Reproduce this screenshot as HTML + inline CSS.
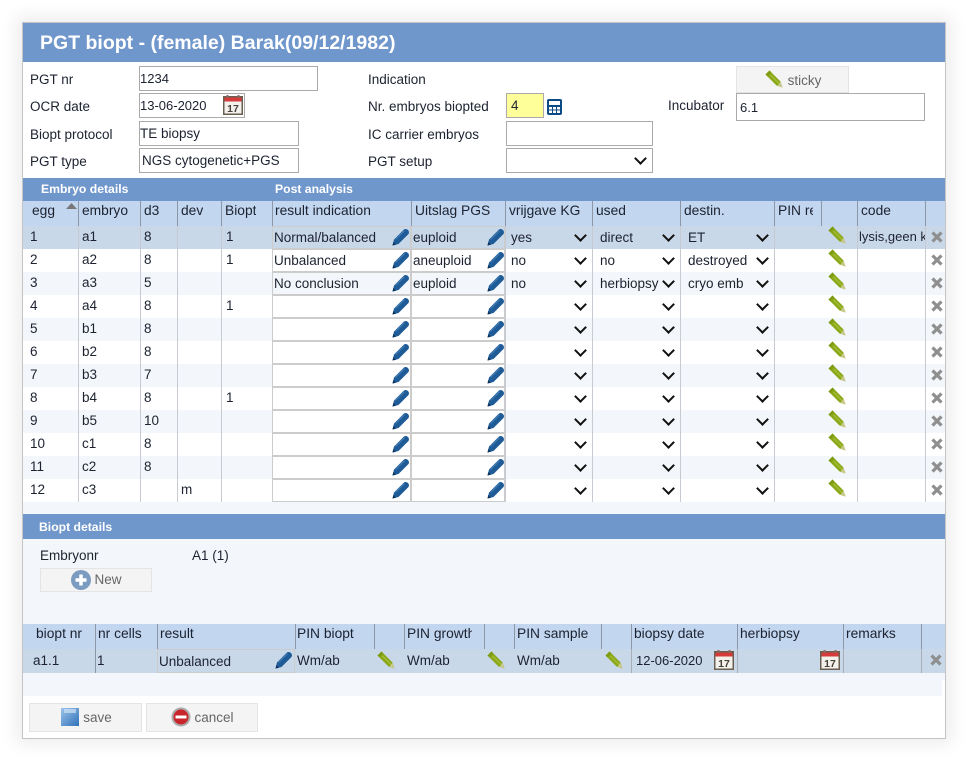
<!DOCTYPE html>
<html><head><meta charset="utf-8"><title>PGT biopt</title>
<style>
*{box-sizing:border-box}
html,body{margin:0;padding:0;background:#fff}
body{width:968px;height:761px;position:relative;overflow:hidden;font:13.5px "Liberation Sans",sans-serif;color:#1c2230}
#p,.s,.l,.in,.f,.h,.hs,.t,.v,.btn,svg,.sel,.bar{position:absolute}
#p{left:22px;top:22px;width:924px;height:717px;background:#fff;border:1px solid #c4c4c4;box-shadow:0 0 16px 6px rgba(0,0,0,.07)}
.bar{background:#7097cc;left:23px;width:922px}
.s{color:#fff;font-weight:bold;font-size:12.2px;white-space:nowrap}
.l{white-space:nowrap;line-height:16px}
.f{border:1px solid #aaa;height:25px;line-height:23px;padding-left:0;white-space:nowrap;background:#fff}
.h{background:#c2d6ef;left:23px;width:922px}
.hs{top:0;width:1px;background:#8b97a6}
.t{white-space:nowrap;line-height:16px;overflow:hidden}
.th{font-size:13.8px;margin-top:-1px}
.v{width:1px;background:#c6cbd1}
.in{border:1px solid #ccc;height:23px;line-height:22px;white-space:nowrap;padding-left:1px}
.sel{height:23px;display:block}
.sel select{display:block;width:100%;height:100%;border:0;background:transparent;font:13.5px "Liberation Sans",sans-serif;color:#1c2230;padding:0 0 0 4px;margin:0;outline:0;appearance:none;-webkit-appearance:none}
.sel::after{content:"";position:absolute;right:7.5px;top:5px;width:7px;height:7px;border-right:2px solid #111;border-bottom:2px solid #111;transform:rotate(45deg);pointer-events:none}
.s1{left:507px;width:85px}.s2{left:596px;width:84px}.s3{left:684px;width:90px}
.btn{background:#f4f4f4;border:1px solid #e4e4e4;color:#666;text-align:center;white-space:nowrap}
</style></head><body>
<svg width="0" height="0" style="left:0;top:0"><defs>
<symbol id="bp" viewBox="0 0 18 18"><path d="M.5 17.500 L2 11.500 L12 1.500 Q14 .3 16 2 Q17.700 4 16.500 6 L6.500 16 Z" fill="#1f5c97"/><path d="M3.500 11.500 L12.500 2.700" stroke="#3f7cb5" stroke-width="1.200" fill="none"/><path d="M.5 17.500 L1.300 14 L4 16.700 Z" fill="#0e3560"/></symbol>
<symbol id="gp" viewBox="0 0 18 18"><path d="M.5 4.500 L4.500 .5 L15.500 11.500 L17.500 17.500 L11.500 15.500 Z" fill="#8aa81a"/><path d="M5.500 5 L14 13.500" stroke="#a6c03a" stroke-width="1.200"/><path d="M15.500 11.500 L17.500 17.500 L12.500 15.800Z" fill="#c9c88a"/><path d="M.5 4.500 L4.500 .5 L6.300 2.300 L2.300 6.300Z" fill="#7d9a10"/></symbol>
<symbol id="x" viewBox="0 0 12 12"><path d="M1.500 1.500 L10.500 10.500 M10.500 1.500 L1.500 10.500" stroke="#8f8f8f" stroke-width="3.200"/></symbol>
<symbol id="cal" viewBox="0 0 20 20"><rect x=".75" y="1.750" width="18.500" height="17.500" fill="#f3f1ec" stroke="#6a5f50" stroke-width="1.500"/><rect x="1.500" y="2.500" width="17" height="4" fill="#d63a3a"/><rect x="3.500" y="0" width="2" height="3" fill="#8a6a60"/><rect x="14.500" y="0" width="2" height="3" fill="#8a6a60"/><text x="10" y="17" text-anchor="middle" font-family="Liberation Sans,sans-serif" font-weight="bold" font-size="10.500" fill="#4a4238">17</text></symbol>
<linearGradient id="fl" x1="0" y1="0" x2="1" y2="1"><stop offset="0" stop-color="#9cc4ea"/><stop offset="1" stop-color="#2f72b8"/></linearGradient>
</defs></svg>

<div id="p"></div>
<div class="bar" style="top:23px;height:39px"></div>
<div class="s" style="left:40px;top:32px;font-size:19.500px;line-height:22px">PGT biopt - (female) Barak(09/12/1982)</div>

<div class="l" style="left:30px;top:72px">PGT nr</div>
<div class="l" style="left:30px;top:99px">OCR date</div>
<div class="l" style="left:30px;top:127px">Biopt protocol</div>
<div class="l" style="left:30px;top:154px">PGT type</div>
<div class="l" style="left:368px;top:72px">Indication</div>
<div class="l" style="left:368px;top:99px">Nr. embryos biopted</div>
<div class="l" style="left:368px;top:127px">IC carrier embryos</div>
<div class="l" style="left:368px;top:154px">PGT setup</div>
<div class="l" style="left:668px;top:98px">Incubator</div>

<div class="f" style="left:139px;top:66px;width:179px;font-size:13px">1234</div>
<div class="f" style="left:139px;top:93px;width:106px;font-size:13px">13-06-2020</div>
<svg style="left:223px;top:95px" width="20" height="20"><use href="#cal"/></svg>
<div class="f" style="left:139px;top:121px;width:160px">TE biopsy</div>
<div class="f" style="left:139px;top:148px;width:160px;padding-left:2px">NGS cytogenetic+PGS</div>
<div class="f" style="left:506px;top:93px;width:38px;background:#ffff99;padding-left:4px">4</div>
<svg style="left:547px;top:99px" width="15" height="16" viewBox="0 0 15 16"><rect x="0" y="0" width="15" height="16" rx="2" fill="#0b4a84"/><rect x="2" y="2" width="11" height="4" fill="#fff"/><path d="M2 8h3v2.500H2zM6 8h3v2.500H6zM10 8h3v2.500h-3zM2 11.500h3V14H2zM6 11.500h3V14H6zM10 11.500h3V14h-3z" fill="#fff"/></svg>
<div class="f" style="left:506px;top:121px;width:147px"></div>
<div class="f" style="left:506px;top:148px;width:147px"></div>
<span class="sel" style="left:507px;top:149px;width:145px"><select><option></option></select></span>
<div class="f" style="left:736px;top:93px;width:189px;height:28px;line-height:28px;padding-left:3px;font-size:13px">6.1</div>
<div class="btn" style="left:736px;top:66px;width:113px;height:27px;line-height:28px;padding-left:24px">sticky</div>
<svg style="left:765px;top:70px" width="18" height="18"><use href="#gp"/></svg>

<div class="bar" style="top:178px;height:23px"></div>
<div class="s" style="left:41px;top:181px;line-height:16px">Embryo details</div>
<div class="s" style="left:275px;top:181px;line-height:16px">Post analysis</div>

<div class="h" style="top:201px;height:25px"></div>
<svg style="left:66px;top:203px" width="11" height="6"><path d="M0 6 L5.500 0 L11 6Z" fill="#777"/></svg>
<div class="hs" style="left:78px;top:201px;height:25px"></div><div class="hs" style="left:140px;top:201px;height:25px"></div><div class="hs" style="left:177px;top:201px;height:25px"></div><div class="hs" style="left:221px;top:201px;height:25px"></div><div class="hs" style="left:272px;top:201px;height:25px"></div><div class="hs" style="left:411px;top:201px;height:25px"></div><div class="hs" style="left:505px;top:201px;height:25px"></div><div class="hs" style="left:592px;top:201px;height:25px"></div><div class="hs" style="left:680px;top:201px;height:25px"></div><div class="hs" style="left:774px;top:201px;height:25px"></div><div class="hs" style="left:821px;top:201px;height:25px"></div><div class="hs" style="left:857px;top:201px;height:25px"></div><div class="hs" style="left:925px;top:201px;height:25px"></div>
<div class="t th" style="left:32px;top:204px">egg</div>
<div class="t th" style="left:82px;top:204px">embryo</div>
<div class="t th" style="left:144px;top:204px">d3</div>
<div class="t th" style="left:181px;top:204px">dev</div>
<div class="t th" style="left:225px;top:204px">Biopt</div>
<div class="t th" style="left:275px;top:204px">result indication</div>
<div class="t th" style="left:415px;top:204px">Uitslag PGS</div>
<div class="t th" style="left:509px;top:204px">vrijgave KG</div>
<div class="t th" style="left:596px;top:204px">used</div>
<div class="t th" style="left:684px;top:204px">destin.</div>
<div class="t th" style="left:778px;top:204px;width:35px">PIN re</div>
<div class="t th" style="left:861px;top:204px">code</div>

<!-- row backgrounds -->
<div class="bar" style="top:226px;height:23px;background:#c9d8e9"></div>
<div class="bar" style="top:272px;height:23px;background:#f3f6fa"></div>
<div class="bar" style="top:318px;height:23px;background:#f3f6fa"></div>
<div class="bar" style="top:364px;height:23px;background:#f3f6fa"></div>
<div class="bar" style="top:410px;height:23px;background:#f3f6fa"></div>
<div class="bar" style="top:456px;height:23px;background:#f3f6fa"></div>
<div class="bar" style="top:502px;height:194px;background:#f3f6fa"></div>
<div class="bar" style="top:680px;height:16px;left:942px;width:3px;background:#fff"></div>
<!-- row separators -->
<div class="v" style="left:78px;top:226px;height:276px"></div><div class="v" style="left:140px;top:226px;height:276px"></div><div class="v" style="left:177px;top:226px;height:276px"></div><div class="v" style="left:221px;top:226px;height:276px"></div><div class="v" style="left:505px;top:226px;height:276px"></div><div class="v" style="left:592px;top:226px;height:276px"></div><div class="v" style="left:680px;top:226px;height:276px"></div><div class="v" style="left:774px;top:226px;height:276px"></div><div class="v" style="left:857px;top:226px;height:276px"></div><div class="v" style="left:925px;top:226px;height:276px"></div>

<!-- row 1 -->
<div class="t" style="left:30px;top:229px">1</div><div class="t" style="left:82px;top:229px">a1</div><div class="t" style="left:144px;top:229px">8</div><div class="t" style="left:226px;top:229px">1</div>
<div class="in" style="left:272px;top:226px;width:139px">Normal/balanced</div><div class="in" style="left:411px;top:226px;width:94px">euploid</div>
<svg style="left:392px;top:228px" width="18" height="18"><use href="#bp"/></svg><svg style="left:487px;top:228px" width="18" height="18"><use href="#bp"/></svg>
<span class="sel s1" style="top:226px"><select><option>yes</option></select></span><span class="sel s2" style="top:226px"><select><option>direct</option></select></span><span class="sel s3" style="top:226px"><select><option>ET</option></select></span>
<svg style="left:828px;top:226px" width="18" height="18"><use href="#gp"/></svg>
<div class="t" style="left:859px;top:229px;width:66px;font-size:13px">lysis,geen k</div>
<svg style="left:931px;top:231px" width="12" height="12"><use href="#x"/></svg>
<!-- row 2 -->
<div class="t" style="left:30px;top:252px">2</div><div class="t" style="left:82px;top:252px">a2</div><div class="t" style="left:144px;top:252px">8</div><div class="t" style="left:226px;top:252px">1</div>
<div class="in" style="left:272px;top:249px;width:139px">Unbalanced</div><div class="in" style="left:411px;top:249px;width:94px">aneuploid</div>
<svg style="left:392px;top:251px" width="18" height="18"><use href="#bp"/></svg><svg style="left:487px;top:251px" width="18" height="18"><use href="#bp"/></svg>
<span class="sel s1" style="top:249px"><select><option>no</option></select></span><span class="sel s2" style="top:249px"><select><option>no</option></select></span><span class="sel s3" style="top:249px"><select><option>destroyed</option></select></span>
<svg style="left:828px;top:249px" width="18" height="18"><use href="#gp"/></svg>
<svg style="left:931px;top:254px" width="12" height="12"><use href="#x"/></svg>
<!-- row 3 -->
<div class="t" style="left:30px;top:275px">3</div><div class="t" style="left:82px;top:275px">a3</div><div class="t" style="left:144px;top:275px">5</div>
<div class="in" style="left:272px;top:272px;width:139px">No conclusion</div><div class="in" style="left:411px;top:272px;width:94px">euploid</div>
<svg style="left:392px;top:274px" width="18" height="18"><use href="#bp"/></svg><svg style="left:487px;top:274px" width="18" height="18"><use href="#bp"/></svg>
<span class="sel s1" style="top:272px"><select><option>no</option></select></span><span class="sel s2" style="top:272px"><select><option>herbiopsy</option></select></span><span class="sel s3" style="top:272px"><select><option>cryo emb</option></select></span>
<svg style="left:828px;top:272px" width="18" height="18"><use href="#gp"/></svg>
<svg style="left:931px;top:277px" width="12" height="12"><use href="#x"/></svg>
<!-- row 4 -->
<div class="t" style="left:30px;top:298px">4</div><div class="t" style="left:82px;top:298px">a4</div><div class="t" style="left:144px;top:298px">8</div><div class="t" style="left:226px;top:298px">1</div>
<div class="in" style="left:272px;top:295px;width:139px;background:#fff"></div><div class="in" style="left:411px;top:295px;width:94px;background:#fff"></div>
<svg style="left:392px;top:297px" width="18" height="18"><use href="#bp"/></svg><svg style="left:487px;top:297px" width="18" height="18"><use href="#bp"/></svg>
<span class="sel s1" style="top:295px"><select><option></option></select></span><span class="sel s2" style="top:295px"><select><option></option></select></span><span class="sel s3" style="top:295px"><select><option></option></select></span>
<svg style="left:828px;top:295px" width="18" height="18"><use href="#gp"/></svg>
<svg style="left:931px;top:300px" width="12" height="12"><use href="#x"/></svg>
<!-- row 5 -->
<div class="t" style="left:30px;top:321px">5</div><div class="t" style="left:82px;top:321px">b1</div><div class="t" style="left:144px;top:321px">8</div>
<div class="in" style="left:272px;top:318px;width:139px;background:#fff"></div><div class="in" style="left:411px;top:318px;width:94px;background:#fff"></div>
<svg style="left:392px;top:320px" width="18" height="18"><use href="#bp"/></svg><svg style="left:487px;top:320px" width="18" height="18"><use href="#bp"/></svg>
<span class="sel s1" style="top:318px"><select><option></option></select></span><span class="sel s2" style="top:318px"><select><option></option></select></span><span class="sel s3" style="top:318px"><select><option></option></select></span>
<svg style="left:828px;top:318px" width="18" height="18"><use href="#gp"/></svg>
<svg style="left:931px;top:323px" width="12" height="12"><use href="#x"/></svg>
<!-- row 6 -->
<div class="t" style="left:30px;top:344px">6</div><div class="t" style="left:82px;top:344px">b2</div><div class="t" style="left:144px;top:344px">8</div>
<div class="in" style="left:272px;top:341px;width:139px;background:#fff"></div><div class="in" style="left:411px;top:341px;width:94px;background:#fff"></div>
<svg style="left:392px;top:343px" width="18" height="18"><use href="#bp"/></svg><svg style="left:487px;top:343px" width="18" height="18"><use href="#bp"/></svg>
<span class="sel s1" style="top:341px"><select><option></option></select></span><span class="sel s2" style="top:341px"><select><option></option></select></span><span class="sel s3" style="top:341px"><select><option></option></select></span>
<svg style="left:828px;top:341px" width="18" height="18"><use href="#gp"/></svg>
<svg style="left:931px;top:346px" width="12" height="12"><use href="#x"/></svg>
<!-- row 7 -->
<div class="t" style="left:30px;top:367px">7</div><div class="t" style="left:82px;top:367px">b3</div><div class="t" style="left:144px;top:367px">7</div>
<div class="in" style="left:272px;top:364px;width:139px;background:#fff"></div><div class="in" style="left:411px;top:364px;width:94px;background:#fff"></div>
<svg style="left:392px;top:366px" width="18" height="18"><use href="#bp"/></svg><svg style="left:487px;top:366px" width="18" height="18"><use href="#bp"/></svg>
<span class="sel s1" style="top:364px"><select><option></option></select></span><span class="sel s2" style="top:364px"><select><option></option></select></span><span class="sel s3" style="top:364px"><select><option></option></select></span>
<svg style="left:828px;top:364px" width="18" height="18"><use href="#gp"/></svg>
<svg style="left:931px;top:369px" width="12" height="12"><use href="#x"/></svg>
<!-- row 8 -->
<div class="t" style="left:30px;top:390px">8</div><div class="t" style="left:82px;top:390px">b4</div><div class="t" style="left:144px;top:390px">8</div><div class="t" style="left:226px;top:390px">1</div>
<div class="in" style="left:272px;top:387px;width:139px;background:#fff"></div><div class="in" style="left:411px;top:387px;width:94px;background:#fff"></div>
<svg style="left:392px;top:389px" width="18" height="18"><use href="#bp"/></svg><svg style="left:487px;top:389px" width="18" height="18"><use href="#bp"/></svg>
<span class="sel s1" style="top:387px"><select><option></option></select></span><span class="sel s2" style="top:387px"><select><option></option></select></span><span class="sel s3" style="top:387px"><select><option></option></select></span>
<svg style="left:828px;top:387px" width="18" height="18"><use href="#gp"/></svg>
<svg style="left:931px;top:392px" width="12" height="12"><use href="#x"/></svg>
<!-- row 9 -->
<div class="t" style="left:30px;top:413px">9</div><div class="t" style="left:82px;top:413px">b5</div><div class="t" style="left:144px;top:413px">10</div>
<div class="in" style="left:272px;top:410px;width:139px;background:#fff"></div><div class="in" style="left:411px;top:410px;width:94px;background:#fff"></div>
<svg style="left:392px;top:412px" width="18" height="18"><use href="#bp"/></svg><svg style="left:487px;top:412px" width="18" height="18"><use href="#bp"/></svg>
<span class="sel s1" style="top:410px"><select><option></option></select></span><span class="sel s2" style="top:410px"><select><option></option></select></span><span class="sel s3" style="top:410px"><select><option></option></select></span>
<svg style="left:828px;top:410px" width="18" height="18"><use href="#gp"/></svg>
<svg style="left:931px;top:415px" width="12" height="12"><use href="#x"/></svg>
<!-- row 10 -->
<div class="t" style="left:30px;top:436px">10</div><div class="t" style="left:82px;top:436px">c1</div><div class="t" style="left:144px;top:436px">8</div>
<div class="in" style="left:272px;top:433px;width:139px;background:#fff"></div><div class="in" style="left:411px;top:433px;width:94px;background:#fff"></div>
<svg style="left:392px;top:435px" width="18" height="18"><use href="#bp"/></svg><svg style="left:487px;top:435px" width="18" height="18"><use href="#bp"/></svg>
<span class="sel s1" style="top:433px"><select><option></option></select></span><span class="sel s2" style="top:433px"><select><option></option></select></span><span class="sel s3" style="top:433px"><select><option></option></select></span>
<svg style="left:828px;top:433px" width="18" height="18"><use href="#gp"/></svg>
<svg style="left:931px;top:438px" width="12" height="12"><use href="#x"/></svg>
<!-- row 11 -->
<div class="t" style="left:30px;top:459px">11</div><div class="t" style="left:82px;top:459px">c2</div><div class="t" style="left:144px;top:459px">8</div>
<div class="in" style="left:272px;top:456px;width:139px;background:#fff"></div><div class="in" style="left:411px;top:456px;width:94px;background:#fff"></div>
<svg style="left:392px;top:458px" width="18" height="18"><use href="#bp"/></svg><svg style="left:487px;top:458px" width="18" height="18"><use href="#bp"/></svg>
<span class="sel s1" style="top:456px"><select><option></option></select></span><span class="sel s2" style="top:456px"><select><option></option></select></span><span class="sel s3" style="top:456px"><select><option></option></select></span>
<svg style="left:828px;top:456px" width="18" height="18"><use href="#gp"/></svg>
<svg style="left:931px;top:461px" width="12" height="12"><use href="#x"/></svg>
<!-- row 12 -->
<div class="t" style="left:30px;top:482px">12</div><div class="t" style="left:82px;top:482px">c3</div><div class="t" style="left:181px;top:482px">m</div>
<div class="in" style="left:272px;top:479px;width:139px;background:#fff"></div><div class="in" style="left:411px;top:479px;width:94px;background:#fff"></div>
<svg style="left:392px;top:481px" width="18" height="18"><use href="#bp"/></svg><svg style="left:487px;top:481px" width="18" height="18"><use href="#bp"/></svg>
<span class="sel s1" style="top:479px"><select><option></option></select></span><span class="sel s2" style="top:479px"><select><option></option></select></span><span class="sel s3" style="top:479px"><select><option></option></select></span>
<svg style="left:828px;top:479px" width="18" height="18"><use href="#gp"/></svg>
<svg style="left:931px;top:484px" width="12" height="12"><use href="#x"/></svg>

<!-- Biopt details -->
<div class="bar" style="top:514px;height:25px"></div>
<div class="s" style="left:39px;top:519px;line-height:16px">Biopt details</div>
<div class="l" style="left:40px;top:548px">Embryonr</div>
<div class="l" style="left:192px;top:548px">A1 (1)</div>
<div class="btn" style="left:40px;top:568px;width:112px;height:24px;line-height:22px;padding-left:24px">New</div>
<svg style="left:71px;top:570px" width="20" height="20"><circle cx="10" cy="10" r="10" fill="#7b9cc0"/><path d="M10 4.500v11M4.500 10h11" stroke="#fff" stroke-width="3.500"/></svg>

<div class="h" style="top:624px;height:25px"></div>
<div class="hs" style="left:95px;top:624px;height:25px"></div><div class="hs" style="left:157px;top:624px;height:25px"></div><div class="hs" style="left:295px;top:624px;height:25px"></div><div class="hs" style="left:374px;top:624px;height:25px"></div><div class="hs" style="left:404px;top:624px;height:25px"></div><div class="hs" style="left:484px;top:624px;height:25px"></div><div class="hs" style="left:514px;top:624px;height:25px"></div><div class="hs" style="left:601px;top:624px;height:25px"></div><div class="hs" style="left:631px;top:624px;height:25px"></div><div class="hs" style="left:737px;top:624px;height:25px"></div><div class="hs" style="left:843px;top:624px;height:25px"></div><div class="hs" style="left:921px;top:624px;height:25px"></div>
<div class="t th" style="left:36px;top:627px">biopt nr</div>
<div class="t th" style="left:98px;top:627px">nr cells</div>
<div class="t th" style="left:160px;top:627px">result</div>
<div class="t th" style="left:297px;top:627px">PIN biopt</div>
<div class="t th" style="left:407px;top:627px;width:65px">PIN growth</div>
<div class="t th" style="left:517px;top:627px">PIN sample</div>
<div class="t th" style="left:634px;top:627px">biopsy date</div>
<div class="t th" style="left:740px;top:627px">herbiopsy</div>
<div class="t th" style="left:846px;top:627px">remarks</div>

<div class="bar" style="top:649px;height:24px;background:#c9d8e9"></div>
<div class="v" style="left:95px;top:649px;height:24px;background:#8b97a6"></div><div class="v" style="left:631px;top:649px;height:24px;background:#a5aeb9"></div><div class="v" style="left:737px;top:649px;height:24px;background:#a5aeb9"></div><div class="v" style="left:843px;top:649px;height:24px;background:#a5aeb9"></div><div class="v" style="left:921px;top:649px;height:24px;background:#a5aeb9"></div>
<div class="t" style="left:33px;top:653px">a1.1</div>
<div class="t" style="left:97px;top:653px">1</div>
<div class="in" style="left:157px;top:649px;width:138px;height:24px;line-height:23px;padding-left:1px">Unbalanced</div>
<svg style="left:275px;top:651px" width="18" height="18"><use href="#bp"/></svg>
<div class="t" style="left:297px;top:653px">Wm/ab</div>
<svg style="left:377px;top:651px" width="18" height="18"><use href="#gp"/></svg>
<div class="t" style="left:407px;top:653px">Wm/ab</div>
<svg style="left:487px;top:651px" width="18" height="18"><use href="#gp"/></svg>
<div class="t" style="left:517px;top:653px">Wm/ab</div>
<svg style="left:605px;top:651px" width="18" height="18"><use href="#gp"/></svg>
<div class="t" style="left:636px;top:653px;font-size:13px">12-06-2020</div>
<svg style="left:714px;top:650px" width="20" height="20"><use href="#cal"/></svg>
<svg style="left:820px;top:650px" width="20" height="20"><use href="#cal"/></svg>
<svg style="left:930px;top:654px" width="12" height="12"><use href="#x"/></svg>

<!-- Bottom buttons -->
<div class="btn" style="left:29px;top:703px;width:113px;height:29px;line-height:28px;padding-left:24px">save</div>
<svg style="left:61px;top:708px" width="18" height="18"><rect width="18" height="18" fill="url(#fl)"/><rect x="3" y="1" width="12" height="4" fill="#cfe2f5" opacity=".7"/></svg>
<div class="btn" style="left:146px;top:703px;width:112px;height:29px;line-height:28px;padding-left:24px">cancel</div>
<svg style="left:171px;top:707px" width="20" height="20"><circle cx="10" cy="10" r="9.500" fill="#aaa"/><circle cx="10" cy="10" r="7.500" fill="#c8252c"/><rect x="4.500" y="8.500" width="11" height="3" fill="#fff"/></svg>
</body></html>
